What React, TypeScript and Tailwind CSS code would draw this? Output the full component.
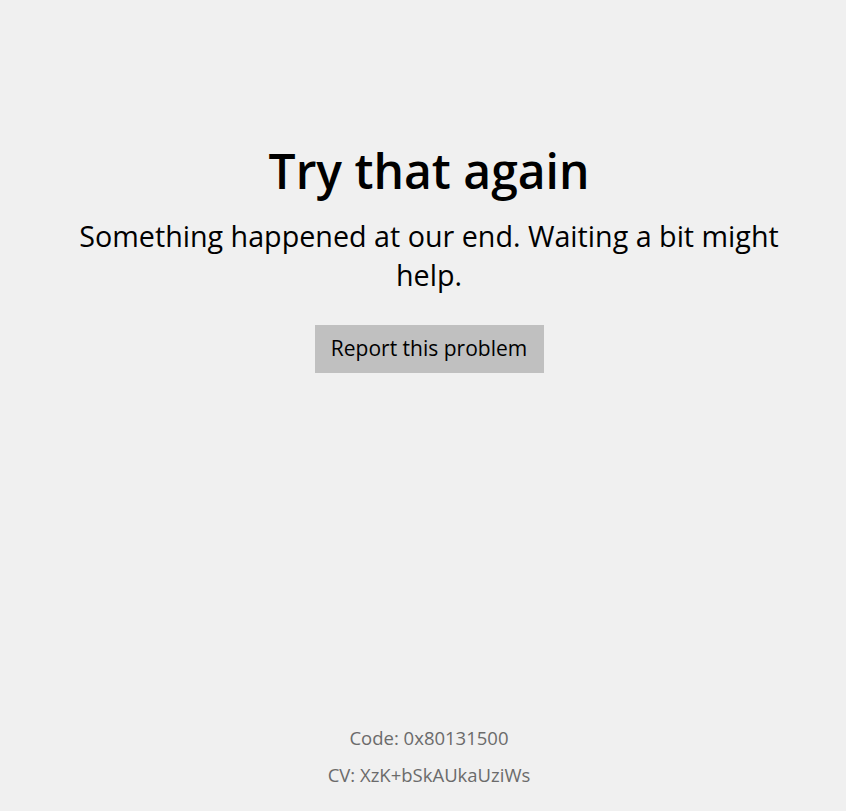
export default function App() {
  return (
    <div className="h-screen bg-[#f0f0f0] flex flex-col items-center pl-3 text-black">
      <div className="flex flex-col items-center pt-[142px] w-full font-['Open_Sans',sans-serif]">
        <h1 className="text-[48px] leading-[58px] font-semibold text-center">Try that again</h1>
        <p className="mt-[16px] text-[28.7px] leading-[39px] text-center max-w-[730px]">
          Something happened at our end. Waiting a bit might help.
        </p>
        <button className="mt-[31px] h-[48px] w-[229px] bg-[#c0c0c0] text-[21px] text-black">
          Report this problem
        </button>
      </div>
      <div className="mt-auto pb-[23px] flex flex-col items-center gap-[10px] text-[18.5px] leading-[27px] text-[#6b6b6b] font-['Open_Sans',sans-serif]">
        <div>Code: 0x80131500</div>
        <div>CV: XzK+bSkAUkaUziWs</div>
      </div>
    </div>
  );
}
